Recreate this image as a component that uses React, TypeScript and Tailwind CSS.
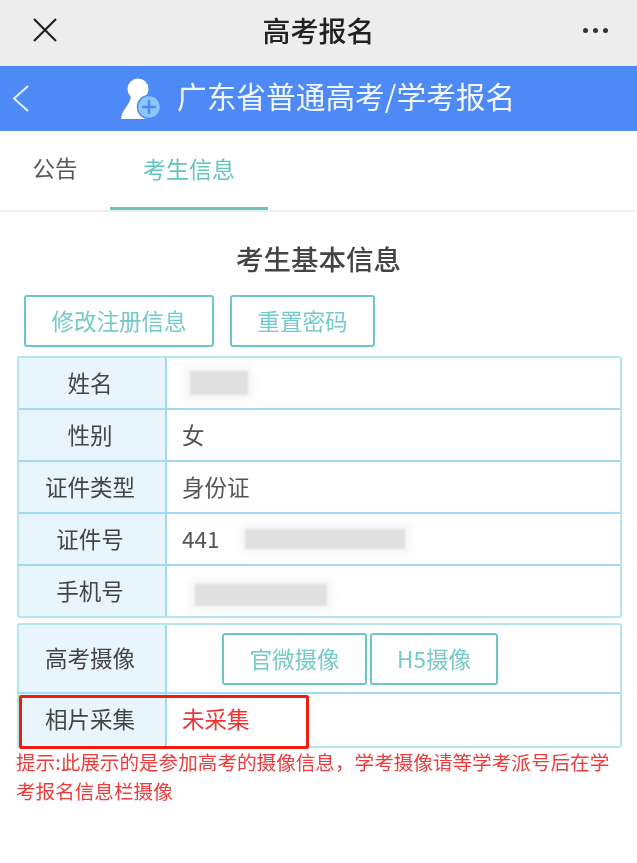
import React from 'react';

const font = { fontFamily: '"Noto Sans CJK SC", "Liberation Sans", sans-serif' };

function Label({ text }: { text: string }) {
  return (
    <div className="w-[148px] shrink-0 bg-[#e8f5fd] border-r-2 border-[#a4d9f4] flex items-center justify-center pr-[4px] text-[22.5px] text-[#444]">
      {text}
    </div>
  );
}

function Row({ label, children, last }: { label: string; children?: React.ReactNode; last?: boolean }) {
  return (
    <div className={`flex ${last ? 'h-[50px]' : 'h-[52px] border-b-2 border-[#a4d9f4]'}`}>
      <Label text={label} />
      <div className="flex-1 flex items-center pl-[15px] text-[22.5px] text-[#555]">{children}</div>
    </div>
  );
}

function Smudge({ className }: { className: string }) {
  return <div className={`bg-[#e0e0e0] blur-[1px] shadow-[0_0_8px_5px_#f5f5f5] ${className}`} />;
}

export default function App() {
  return (
    <div style={font} className="relative w-[637px] h-[863px] bg-white overflow-hidden">
      <div className="blur-[0.7px]">
        {/* WeChat title bar */}
        <div className="h-[66px] bg-[#ededed] flex items-center justify-between pl-[32px] pr-[29px] pb-[6px]">
          <svg width="26" height="26" viewBox="0 0 26 26" fill="none" stroke="#222" strokeWidth="2.2">
            <path d="M2 2 L24 24 M24 2 L2 24" />
          </svg>
          <div className="text-[28px] font-medium text-[#222] mr-[4px] pb-[1px]">高考报名</div>
          <div className="flex gap-[5px]">
            <div className="w-[5px] h-[5px] rounded-full bg-[#333]" />
            <div className="w-[5px] h-[5px] rounded-full bg-[#333]" />
            <div className="w-[5px] h-[5px] rounded-full bg-[#333]" />
          </div>
        </div>

        {/* blue header */}
        <div className="relative h-[65px] bg-[#4e8af5] flex items-center pl-[120px]">
          <svg className="absolute left-[11px] top-[18px]" width="19" height="29" viewBox="0 0 19 29" fill="none" stroke="#e8f0ff" strokeWidth="2">
            <path d="M17 2 L3 14.5 L17 27" />
          </svg>
          <svg className="mr-[16px] shrink-0" width="41" height="42" viewBox="0 0 41 42">
            <circle cx="18" cy="11" r="10.5" fill="#fff" />
            <path d="M11 17 C11 27 2 30 1 41 L27 41 C22 32 25 24 24 17 Z" fill="#fff" />
            <circle cx="29" cy="29" r="11.5" fill="#8cc6fa" stroke="#4e8af5" strokeWidth="1.5" />
            <path d="M29 22 V36 M22 29 H36" stroke="#4e8af5" strokeWidth="2.5" />
          </svg>
          <div className="text-[29.7px] text-[#f2f6ff] pb-[5px] whitespace-nowrap">广东省普通高考/学考报名</div>
        </div>

        {/* tabs */}
        <div className="h-[81px] flex border-b-2 border-[#eeeeee]">
          <div className="w-[110px] flex items-center justify-center text-[22.5px] text-[#555] pb-[5px]">公告</div>
          <div className="w-[158px] flex items-center justify-center text-[23px] text-[#64c4c0] border-b-[3px] border-[#64c4c0] pb-[2px]">
            考生信息
          </div>
        </div>

        <div className="px-[17px]">
          <div className="text-center text-[27.5px] font-medium text-[#444] mt-[26px] leading-[40px]">考生基本信息</div>

          <div className="flex gap-[16px] mt-[17px] ml-[7px]">
            <div className="w-[190px] h-[52px] border-2 border-[#6cc8c8] rounded-[3px] flex items-center justify-center text-[22.5px] text-[#73cac8]">
              修改注册信息
            </div>
            <div className="w-[145px] h-[52px] border-2 border-[#6cc8c8] rounded-[3px] flex items-center justify-center text-[22.5px] text-[#73cac8]">
              重置密码
            </div>
          </div>

          <div className="mt-[9px] w-[605px] border-2 border-[#b3e8ea] rounded-[3px]">
            <Row label="姓名">
              <Smudge className="w-[58px] h-[24px] ml-[8px]" />
            </Row>
            <Row label="性别">女</Row>
            <Row label="证件类型">身份证</Row>
            <Row label="证件号">
              <span>441</span>
              <Smudge className="w-[160px] h-[20px] ml-[26px]" />
            </Row>
            <Row label="手机号" last>
              <Smudge className="w-[132px] h-[22px] ml-[13px] mt-[8px]" />
            </Row>
          </div>

          <div className="mt-[5px] w-[605px] border-2 border-[#b3e8ea] rounded-[3px]">
            <div className="flex h-[69px] border-b-2 border-[#a4d9f4]">
              <div className="w-[148px] shrink-0 bg-[#e8f5fd] border-r-2 border-[#a4d9f4] flex items-center justify-center pr-[4px] pb-[2px] text-[22.5px] text-[#444]">
                高考摄像
              </div>
              <div className="flex-1 flex items-center pl-[55px] gap-[3px] text-[22.5px] text-[#73cac8]">
                <div className="w-[145px] h-[52px] border-2 border-[#6cc8c8] rounded-[3px] flex items-center justify-center">官微摄像</div>
                <div className="w-[128px] h-[52px] border-2 border-[#6cc8c8] rounded-[3px] flex items-center justify-center">H5摄像</div>
              </div>
            </div>
            <div className="flex h-[52px]">
              <div className="w-[148px] shrink-0 bg-[#e8f5fd] border-r-2 border-[#a4d9f4] flex items-center justify-center pr-[4px] pb-[3px] text-[22.5px] text-[#444]">
                相片采集
              </div>
              <div className="flex-1 flex items-center pl-[15px] pb-[3px] text-[22.5px] text-[#ee3333]">未采集</div>
            </div>
          </div>
        </div>

        <div className="-mt-[1px] pl-[16px] pr-[22px] text-[19.6px] leading-[29px] text-[#ee3c3c]">
          提示:此展示的是参加高考的摄像信息，学考摄像请等学考派号后在学考报名信息栏摄像
        </div>
      </div>

      {/* red highlight box drawn over the screenshot */}
      <div className="absolute left-[19px] top-[695px] w-[290px] h-[54px] border-[3px] border-[#f01c14] rounded-[2px]" />
    </div>
  );
}
